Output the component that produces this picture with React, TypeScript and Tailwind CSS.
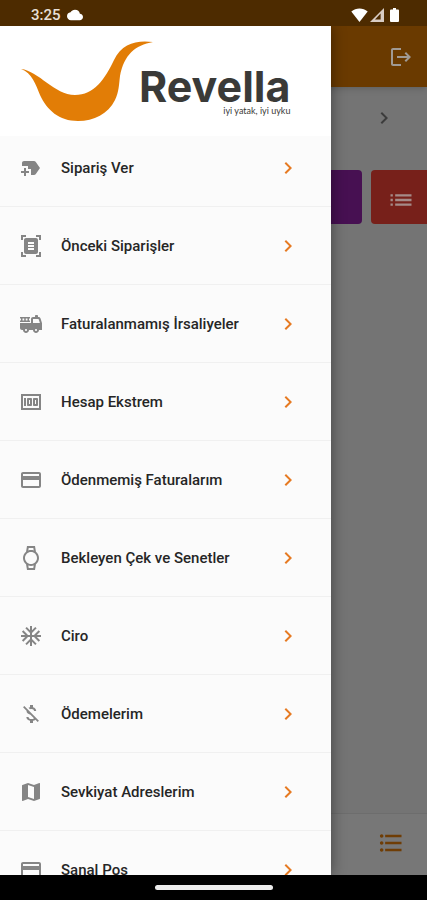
import React from "react";
import type { IconType } from "react-icons";
import {
  MdAcUnit,
  MdChevronRight,
  MdCloud,
  MdCreditCard,
  MdDocumentScanner,
  MdFireTruck,
  MdFormatListBulleted,
  MdList,
  MdLogout,
  MdMap,
  MdMoney,
  MdMoneyOff,
  MdNewLabel,
  MdOutlineWatch,
} from "react-icons/md";

const items: { label: string; icon: IconType }[] = [
  { label: "Sipariş Ver", icon: MdNewLabel },
  { label: "Önceki Siparişler", icon: MdDocumentScanner },
  { label: "Faturalanmamış İrsaliyeler", icon: MdFireTruck },
  { label: "Hesap Ekstrem", icon: MdMoney },
  { label: "Ödenmemiş Faturalarım", icon: MdCreditCard },
  { label: "Bekleyen Çek ve Senetler", icon: MdOutlineWatch },
  { label: "Ciro", icon: MdAcUnit },
  { label: "Ödemelerim", icon: MdMoneyOff },
  { label: "Sevkiyat Adreslerim", icon: MdMap },
  { label: "Sanal Pos", icon: MdCreditCard },
];

function StatusBar() {
  return (
    <div className="flex h-[26px] shrink-0 items-center bg-[#4d2b00] pt-1 pr-7 pl-[31px] text-white">
      <span className="text-[15px] leading-5 font-medium text-[#e8e0d8]">3:25</span>
      <MdCloud className="ml-1.5 size-4" />
      <div className="ml-auto flex items-center gap-0.5">
        <svg viewBox="0 0 17 14" className="h-3.5 w-[17px]" fill="currentColor">
          <path d="M8.5 14 0.3 3.6C5 -0.4 12 -0.4 16.7 3.6Z" />
        </svg>
        <svg viewBox="0 0 14 14" className="size-3.5">
          <path d="M14 0V14H0Z" fill="#d8ccc4" />
          <path d="M10.6 5.6V11.6H5Z" fill="#4d2b00" />
        </svg>
        <svg viewBox="0 0 9 14" className="ml-1 h-3.5 w-[9px]" fill="currentColor">
          <path d="M3 0H6V1.5H8Q9 1.5 9 2.5V13Q9 14 8 14H1Q0 14 0 13V2.5Q0 1.5 1 1.5H3Z" />
        </svg>
      </div>
    </div>
  );
}

function Backdrop() {
  return (
    <main className="flex h-full flex-col bg-[#747474]">
      <header className="flex h-[61px] items-center justify-end bg-[#6a3a00] pr-3.5 shadow-md">
        <button type="button" aria-label="Çıkış" className="text-[#a09a94]">
          <MdLogout className="size-6" />
        </button>
      </header>
      <div className="flex h-[61px] items-center justify-end pr-[31px]">
        <button type="button" aria-label="İleri" className="text-[#3c3c3c]">
          <MdChevronRight className="size-6" />
        </button>
      </div>
      <div className="mt-[22px] flex h-[54px] justify-end gap-[9px]">
        <button type="button" aria-label="Özet" className="w-20 rounded-sm bg-[#471052]" />
        <button
          type="button"
          aria-label="Liste"
          className="flex w-14 items-center rounded-l-sm bg-[#77201a] pt-1.5 pl-4 text-[#a58a88]"
        >
          <MdList className="size-7" />
        </button>
      </div>
      <footer className="mt-auto flex h-[62px] items-center justify-end border-t border-[#6d6d6d] bg-[#777777] pr-[22px] pb-1">
        <button type="button" aria-label="Menü" className="text-[#6f3d05]">
          <MdFormatListBulleted className="size-7" />
        </button>
      </footer>
    </main>
  );
}

function Logo() {
  return (
    <div className="relative z-10 flex h-[110px] shrink-0 items-start bg-white pl-[21px]">
      <svg viewBox="0 0 132 82" className="mt-3.5 h-[82px] w-[132px] shrink-0" aria-hidden="true">
        <path
          d="M0 29C18 31 33 55 54 55C73 55 84 39 93 20C101 3 116 0 132 2C114 5 103 15 99 36C98 44 98 52 94 60C87 74 73 81 57 81C38 81 26 70 19 55C15 45 11 33 0 29Z"
          fill="#e27d06"
        />
      </svg>
      <div className="-ml-4 mt-10 flex flex-col items-end pl-0.5 text-[#3a3a38]">
        <span className="font-['Inter',sans-serif] text-[43px] leading-10 font-bold">Revella</span>
        <span className="font-['Lato',sans-serif] text-[9px] leading-[10px]">iyi yatak, iyi uyku</span>
      </div>
    </div>
  );
}

function Drawer() {
  return (
    <aside className="absolute inset-y-0 left-0 flex w-[331px] max-w-[85%] flex-col overflow-hidden bg-[#fbfbfb] shadow-[0_0_14px_rgba(0,0,0,0.45)]">
      <Logo />
      <nav className="-mt-[7px] min-h-0">
        <ul>
          {items.map(({ label, icon: Icon }) => (
            <li key={label} className="border-b border-[#f0f0f0]">
              <a href="#" className="flex h-[77px] items-center pr-[31px] pl-[19px]">
                <Icon className="size-6 shrink-0 text-[#858585]" />
                <span className="ml-[18px] flex-1 text-[15px] leading-5 font-medium whitespace-nowrap text-[#262626]">
                  {label}
                </span>
                <MdChevronRight className="size-6 shrink-0 text-[#e67a22]" />
              </a>
            </li>
          ))}
        </ul>
      </nav>
    </aside>
  );
}

export default function App() {
  return (
    <div className="flex h-screen flex-col overflow-hidden font-['Roboto',sans-serif]">
      <StatusBar />
      <div className="relative min-h-0 flex-1 overflow-hidden">
        <Backdrop />
        <Drawer />
      </div>
      <div className="flex h-[25px] shrink-0 items-center justify-center bg-black">
        <div className="h-[5px] w-[118px] rounded-full bg-[#ececec]" />
      </div>
    </div>
  );
}
